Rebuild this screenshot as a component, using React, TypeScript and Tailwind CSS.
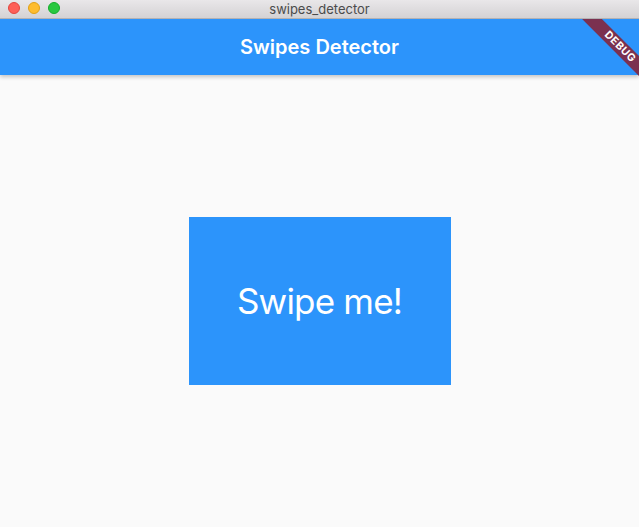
import React from 'react';

const TrafficLights: React.FC = () => (
  <div className="absolute left-[8px] top-[2px] flex gap-[8px]">
    <span className="w-[12px] h-[12px] rounded-full bg-[#fe5f57] border border-[#e2463f]" />
    <span className="w-[12px] h-[12px] rounded-full bg-[#febc2e] border border-[#e1a116]" />
    <span className="w-[12px] h-[12px] rounded-full bg-[#28c840] border border-[#14ae2b]" />
  </div>
);

export default function App() {
  return (
    <div className="w-[639px] h-[527px] flex flex-col bg-[#fafafa] font-['Inter','Roboto',sans-serif] overflow-hidden">
      {/* Window title bar */}
      <div className="relative h-[19px] shrink-0 bg-gradient-to-b from-[#e9e7e9] to-[#d4d2d4] border-b border-[#b3b1b3] flex items-center justify-center">
        <TrafficLights />
        <span className="text-[13px] leading-none text-[#4b4b4b]">swipes_detector</span>
      </div>

      <div className="relative flex-1 flex flex-col overflow-hidden">
        {/* App bar */}
        <div className="relative z-10 h-[56px] shrink-0 bg-[#2c94fb] flex items-center justify-center shadow-[0_2px_4px_rgba(0,0,0,0.22)]">
          <h1 className="text-white text-[20px] font-semibold leading-none">Swipes Detector</h1>
        </div>

        {/* Body */}
        <div className="flex-1 flex items-center justify-center">
          <div className="w-[262px] h-[168px] bg-[#2c94fb] flex items-center justify-center">
            <span className="text-white text-[35px] tracking-[-0.8px] leading-none">Swipe me!</span>
          </div>
        </div>

        {/* Debug banner */}
        <div className="absolute z-20 left-[560px] top-[21px] w-[120px] h-[14px] rotate-45 bg-[#7b3150] flex items-center justify-center">
          <span className="text-white text-[10.5px] font-bold tracking-[0.6px] leading-none">DEBUG</span>
        </div>
      </div>
    </div>
  );
}
